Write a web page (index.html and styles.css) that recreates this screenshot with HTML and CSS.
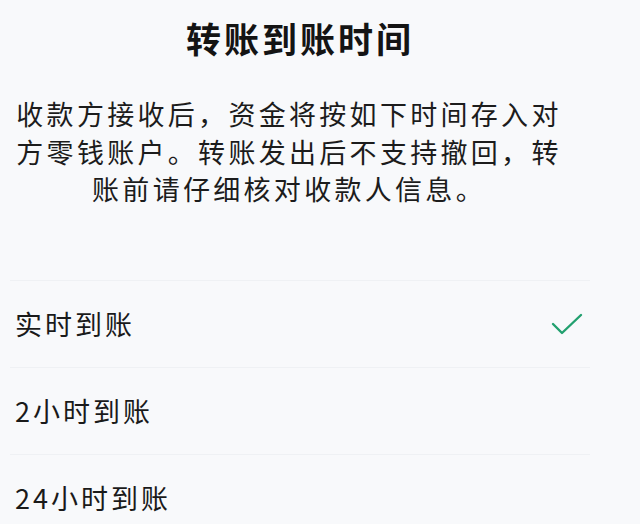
FILE: index.html
```html
<!DOCTYPE html>
<html lang="zh-CN">
<head>
    <meta charset="UTF-8">
    <meta name="viewport" content="width=device-width, initial-scale=1.0">
    <title>转账到账时间</title>
    <link rel="stylesheet" href="styles.css">
</head>
<body>
    <div class="sheet">
        <h1 class="title">转账到账时间</h1>
        <p class="desc">收款方接收后，资金将按如下时间存入对方零钱账户。转账发出后不支持撤回，转账前请仔细核对收款人信息。</p>

        <ul class="options">
            <li class="option">
                <span>实时到账</span>
                <svg class="check" width="34" height="24" viewBox="0 0 34 24">
                    <path d="M3 12 L12 21 L31 3" fill="none" stroke="#22a06f" stroke-width="2.4" stroke-linecap="round" stroke-linejoin="round"/>
                </svg>
            </li>
            <li class="option"><span>2小时到账</span></li>
            <li class="option"><span>24小时到账</span></li>
        </ul>
    </div>
</body>
</html>
```

FILE: styles.css
```css
body {
    margin: 0;
    background: #f8f9fb;
    color: #1b1b1b;
    font-family: "Noto Sans CJK SC", "Noto Sans", sans-serif;
}

.sheet {
    width: 580px;
    padding: 18px 10px 0;
}

.title {
    margin: 0;
    font-size: 35px;
    font-weight: 700;
    line-height: 40px;
    letter-spacing: 3px;
    text-align: center;
    color: #141414;
}

.desc {
    margin: 37px 27px 0 5px;
    font-size: 27px;
    line-height: 37.5px;
    letter-spacing: 3.3px;
    text-align: center;
    color: #1c1c1c;
}

.options {
    list-style: none;
    margin: 72px 0 0;
    padding: 0;
}

.option {
    display: flex;
    align-items: center;
    justify-content: space-between;
    height: 86px;
    padding: 0 6px 0 5px;
    border-top: 1px solid #eff1f4;
    font-size: 27px;
    letter-spacing: 3px;
    color: #1a1a1a;
}

.check {
    display: block;
}
```
